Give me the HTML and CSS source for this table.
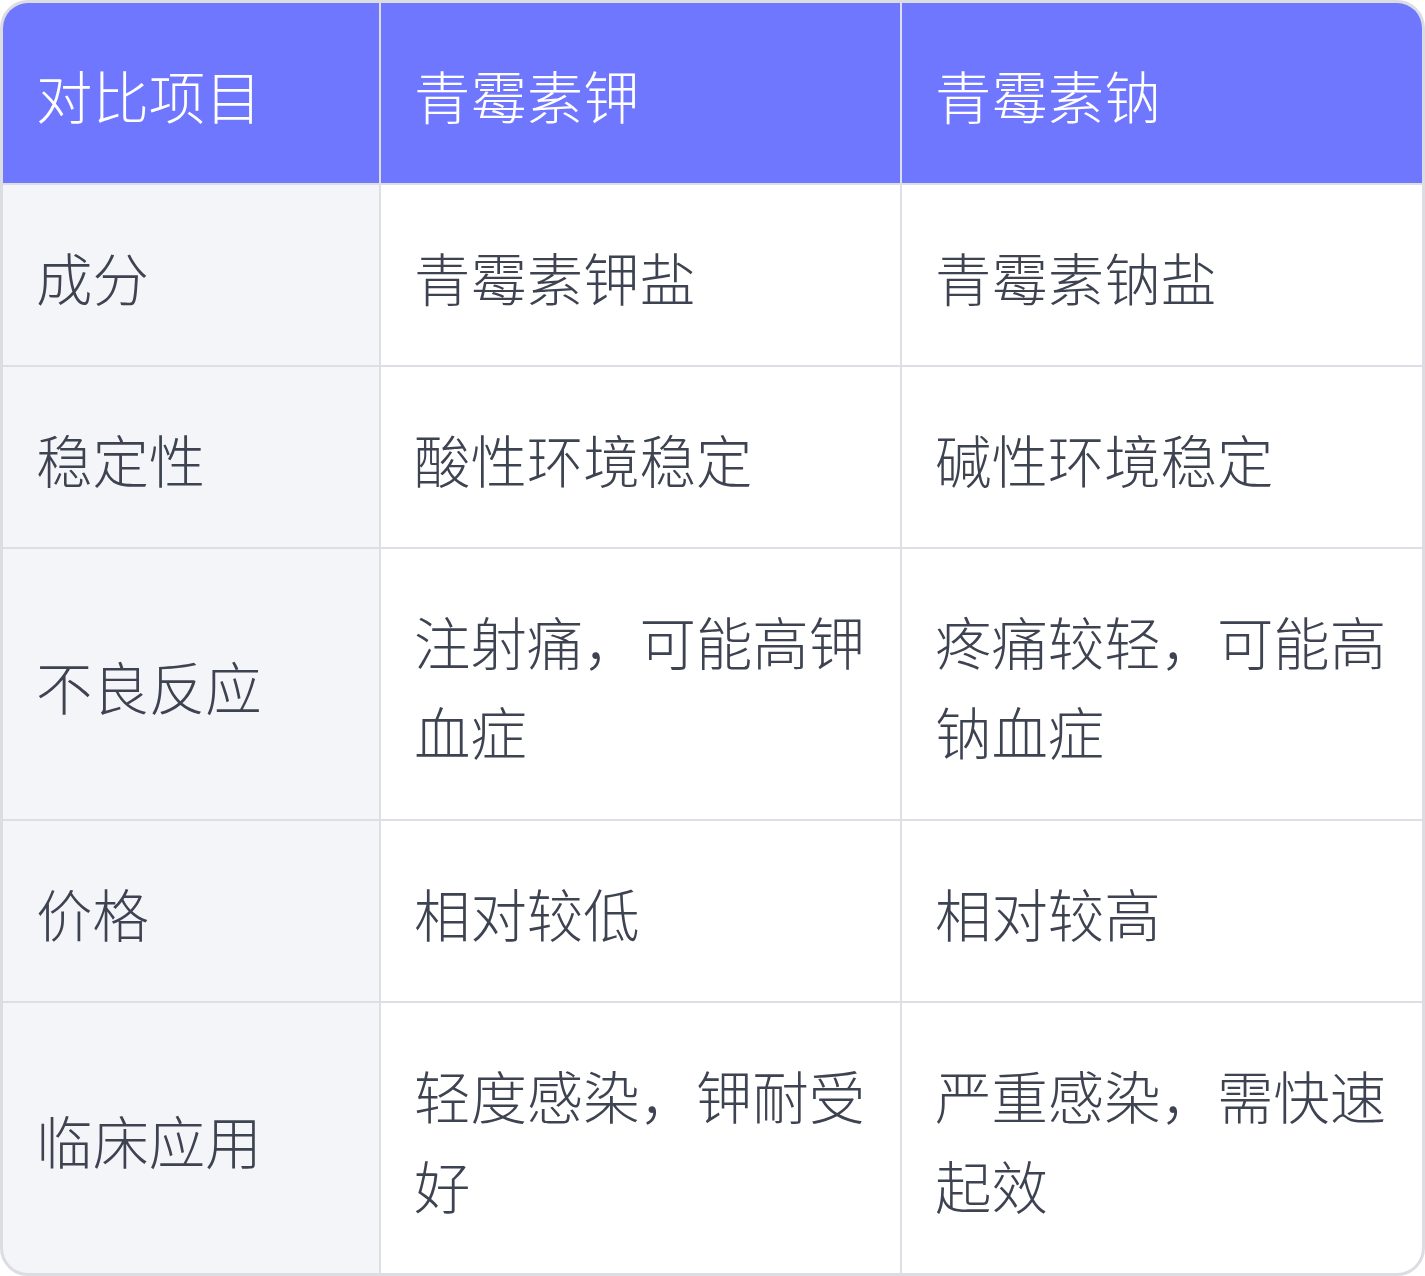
FILE: index.html
```html
<!DOCTYPE html>
<html lang="zh">
<head>
<meta charset="utf-8">
<link rel="stylesheet" href="styles.css">
</head>
<body>
<div class="table">
  <div class="cell head">对比项目</div>
  <div class="cell head">青霉素钾</div>
  <div class="cell head">青霉素钠</div>

  <div class="cell label">成分</div>
  <div class="cell">青霉素钾盐</div>
  <div class="cell">青霉素钠盐</div>

  <div class="cell label">稳定性</div>
  <div class="cell">酸性环境稳定</div>
  <div class="cell">碱性环境稳定</div>

  <div class="cell label">不良反应</div>
  <div class="cell">注射痛，可能高钾血症</div>
  <div class="cell">疼痛较轻，可能高钠血症</div>

  <div class="cell label">价格</div>
  <div class="cell">相对较低</div>
  <div class="cell">相对较高</div>

  <div class="cell label">临床应用</div>
  <div class="cell">轻度感染，钾耐受好</div>
  <div class="cell">严重感染，需快速起效</div>
</div>
</body>
</html>
```

FILE: styles.css
```css
html, body {
  margin: 0;
  padding: 0;
  background: #ffffff;
}

.table {
  width: 1425px;
  height: 1276px;
  box-sizing: border-box;
  border: 3px solid #dcdde3;
  border-radius: 28px;
  overflow: hidden;
  display: grid;
  grid-template-columns: 376px 519px 520px;
  grid-auto-rows: auto;
  gap: 2px;
  background: #dedfe4;
  font-family: "Noto Sans CJK SC", "Noto Sans", sans-serif;
  font-weight: 300;
  font-size: 56.4px;
  line-height: 90px;
  color: #3e4351;
}

.cell {
  background: #ffffff;
  padding: 47px 26px 43px 33px;
  display: flex;
  align-items: center;
}

.cell.head {
  background: #7077ff;
  color: #ffffff;
}

.cell.label {
  background: #f4f5f9;
}
```
